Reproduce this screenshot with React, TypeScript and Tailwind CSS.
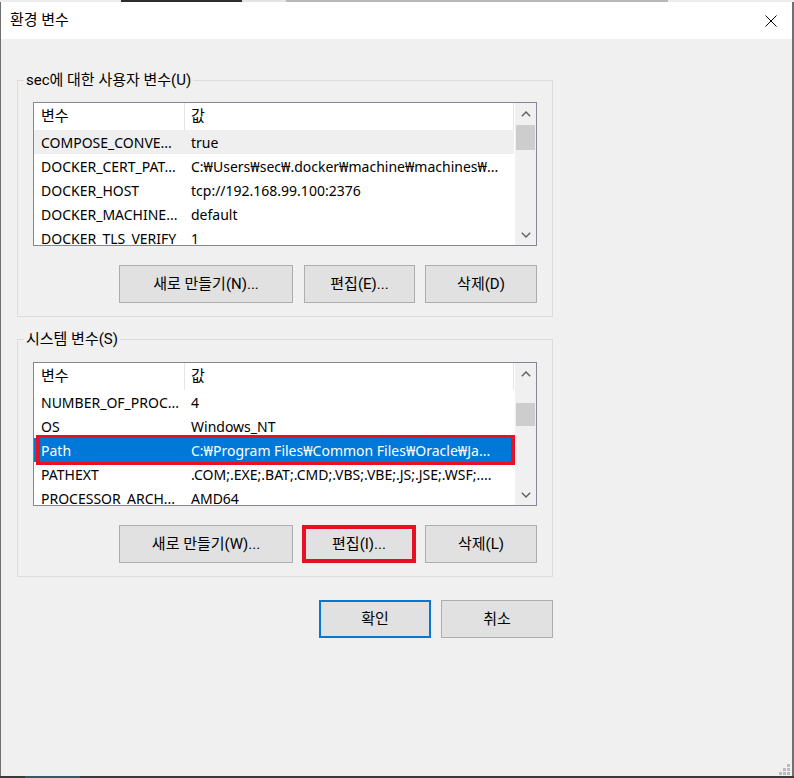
import React from "react";

type Row = { name: string; value: string; hover?: boolean; selected?: boolean };

const userRows: Row[] = [
  { name: "COMPOSE_CONVE...", value: "true", hover: true },
  { name: "DOCKER_CERT_PAT...", value: "C:₩Users₩sec₩.docker₩machine₩machines₩..." },
  { name: "DOCKER_HOST", value: "tcp://192.168.99.100:2376" },
  { name: "DOCKER_MACHINE...", value: "default" },
  { name: "DOCKER_TLS_VERIFY", value: "1" },
];

const sysRows: Row[] = [
  { name: "NUMBER_OF_PROC...", value: "4" },
  { name: "OS", value: "Windows_NT" },
  { name: "Path", value: "C:₩Program Files₩Common Files₩Oracle₩Ja...", selected: true },
  { name: "PATHEXT", value: ".COM;.EXE;.BAT;.CMD;.VBS;.VBE;.JS;.JSE;.WSF;...." },
  { name: "PROCESSOR_ARCH...", value: "AMD64" },
];

function Chevron({ down }: { down?: boolean }) {
  return (
    <svg width="10" height="6" viewBox="0 0 10 6">
      <polyline
        points={down ? "0.8,0.8 5,5 9.2,0.8" : "0.8,5.2 5,1 9.2,5.2"}
        fill="none"
        stroke="#606060"
        strokeWidth="1.4"
      />
    </svg>
  );
}

function Scrollbar({ second }: { second?: boolean }) {
  return (
    <div className="w-[21px] h-full bg-[#f0f0f0] flex flex-col">
      <div className="h-[21px] flex items-center justify-center">
        <Chevron />
      </div>
      <div className="flex-1 flex flex-col">
        <div
          className={
            second
              ? "mt-[19px] h-[23px] mx-px bg-[#cdcdcd]"
              : "mt-[1px] h-[25px] mx-px bg-[#cdcdcd]"
          }
        />
      </div>
      <div className="h-[21px] flex items-center justify-center">
        <Chevron down />
      </div>
    </div>
  );
}

function ListView({ rows, second }: { rows: Row[]; second?: boolean }) {
  return (
    <div
      className={
        (second ? "mt-[13px] " : "mt-[12px] ") +
        "ml-[15px] w-[504px] h-[144px] border border-[#828790] bg-white flex relative"
      }
    >
      <div className="w-[481px] h-full overflow-hidden">
        <div className="flex h-[27px]">
          <div className="w-[151px] pl-[7px] flex items-center border-r border-[#e5e5e5]">변수</div>
          <div className="w-[329px] pl-[6px] flex items-center border-r border-[#e5e5e5]">값</div>
        </div>
        {rows.map((r) => (
          <div
            key={r.name}
            className={
              "flex h-[24px] w-[480px] font-['Noto_Sans','Noto_Sans_CJK_KR',sans-serif] text-[14px] " +
              (r.selected ? "bg-[#0078d7] text-white" : r.hover ? "bg-[#efefef]" : "")
            }
          >
            <div className="w-[151px] pl-[7px] flex items-center overflow-hidden whitespace-nowrap">
              {r.name}
            </div>
            <div className="w-[329px] pl-[6px] pr-[4px] flex items-center overflow-hidden whitespace-nowrap">
              {r.value}
            </div>
          </div>
        ))}
      </div>
      <Scrollbar second={second} />
      {second && (
        <div className="absolute left-[2px] top-[72px] w-[479px] h-[30px] border-y-[3px] border-x-[4px] border-[#e81123]" />
      )}
    </div>
  );
}

function Btn({ label, className }: { label: string; className: string }) {
  return (
    <button
      className={
        "h-[38px] bg-[#e1e1e1] text-black text-[15px] flex items-center justify-center " + className
      }
    >
      {label}
    </button>
  );
}

function Group({ legend, children, className }: { legend: string; children: React.ReactNode; className: string }) {
  return (
    <div className={"w-[536px] border border-[#dcdcdc] flex flex-col " + className}>
      <div className="-mt-[11px] ml-[6px] h-[20px] w-fit px-[2px] bg-[#f0f0f0] leading-[20px] whitespace-nowrap">
        {legend}
      </div>
      {children}
    </div>
  );
}

export default function App() {
  return (
    <div className="w-[794px] h-[778px] flex flex-col font-['Roboto','Noto_Sans_CJK_KR',sans-serif] text-[15px] text-black bg-[#3a3a3a] overflow-hidden">
      <div className="h-[2px] flex">
        <div className="w-[121px] bg-[#ececec]" />
        <div className="w-[121px] bg-[#2d2d2d]" />
        <div className="w-[44px] bg-[#e4e4e4]" />
        <div className="w-[382px] bg-[#b8b8b8]" />
        <div className="flex-1 bg-[#ececec]" />
      </div>
      <div className="flex-1 flex flex-col border-l border-r-2 border-[#707070]">
        <div className="h-[37px] bg-white flex items-center justify-between pl-[9px] pr-[15px]">
          <span>환경 변수</span>
          <svg width="12" height="12" viewBox="0 0 12 12">
            <path d="M0.5 0.5 L11.5 11.5 M11.5 0.5 L0.5 11.5" stroke="#000" strokeWidth="1" fill="none" />
          </svg>
        </div>
        <div className="flex-1 bg-[#f0f0f0] relative flex flex-col pl-[16px]">
          <Group legend="sec에 대한 사용자 변수(U)" className="mt-[41px]">
            <ListView rows={userRows} />
            <div className="mt-[19px] mb-[13px] mr-[15px] flex justify-end">
              <Btn label="새로 만들기(N)..." className="w-[174px] border border-[#adadad]" />
              <Btn label="편집(E)..." className="ml-[11px] w-[111px] border border-[#adadad]" />
              <Btn label="삭제(D)" className="ml-[10px] w-[112px] border border-[#adadad]" />
            </div>
          </Group>
          <Group legend="시스템 변수(S)" className="mt-[22px]">
            <ListView rows={sysRows} second />
            <div className="mt-[19px] mb-[13px] mr-[15px] flex justify-end">
              <Btn label="새로 만들기(W)..." className="w-[174px] border border-[#adadad]" />
              <Btn label="편집(I)..." className="ml-[9px] w-[114px] border-[4px] border-[#e81123]" />
              <Btn label="삭제(L)" className="ml-[9px] w-[112px] border border-[#adadad]" />
            </div>
          </Group>
          <div className="mt-[23px] w-[536px] flex justify-end">
            <Btn label="확인" className="w-[112px] border-2 border-[#0078d7]" />
            <Btn label="취소" className="ml-[10px] w-[112px] border border-[#adadad]" />
          </div>
          <div className="absolute right-[2px] bottom-[1px] grid grid-cols-3 gap-[1px]">
            <div className="w-[3px] h-[3px]" />
            <div className="w-[3px] h-[3px]" />
            <div className="w-[3px] h-[3px] bg-[#bcbcbc]" />
            <div className="w-[3px] h-[3px]" />
            <div className="w-[3px] h-[3px] bg-[#bcbcbc]" />
            <div className="w-[3px] h-[3px] bg-[#bcbcbc]" />
            <div className="w-[3px] h-[3px] bg-[#bcbcbc]" />
            <div className="w-[3px] h-[3px] bg-[#bcbcbc]" />
            <div className="w-[3px] h-[3px] bg-[#bcbcbc]" />
          </div>
        </div>
      </div>
      <div className="h-[2px] flex">
        <div className="w-[25px] bg-[#3a3a3a]" />
        <div className="w-[55px] bg-[#2c5d68]" />
        <div className="flex-1 bg-[#3a3a3a]" />
      </div>
    </div>
  );
}
